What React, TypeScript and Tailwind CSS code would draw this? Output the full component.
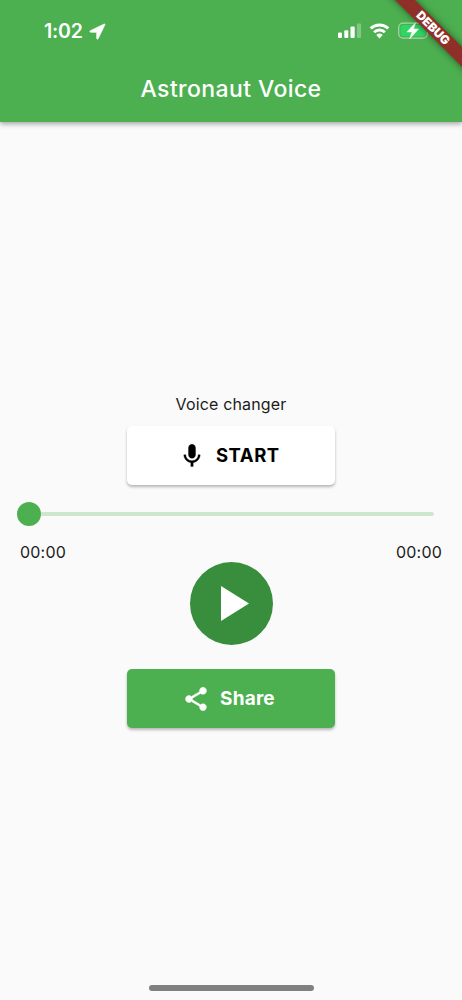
import { useState } from "react";

function StatusBar() {
  return (
    <div className="flex h-[62px] items-center justify-between pl-[44px] pr-[30px]">
      <div className="flex items-center gap-[5px]">
        <span className="w-[40px] whitespace-nowrap text-[19.5px] font-semibold leading-[24px] tracking-[-0.2px]">
          1:02
        </span>
        <svg className="h-[17px] w-[17px]" viewBox="0 0 17 17" fill="currentColor" stroke="currentColor" strokeWidth="0.7">
          <path d="M15.200 1 1.400 7.700c-.9.5-.6 1.500.3 1.500l6 .1v6c0 1 1.100 1.200 1.500.3L15.900 1.800c.3-.6-.2-1-.7-.8Z" />
        </svg>
      </div>

      <svg className="h-[18px] w-[94px]" viewBox="338 22 94 18" fill="none">
        {/* signal */}
        <rect x="338" y="32.600" width="4" height="5.300" rx="1" fill="white" />
        <rect x="344.300" y="30.200" width="4" height="7.700" rx="1" fill="white" />
        <rect x="350.500" y="26.500" width="4.200" height="11.400" rx="1" fill="white" />
        <rect x="356.900" y="23.500" width="4.200" height="14.400" rx="1" fill="white" fillOpacity="0.3" />
        {/* wifi */}
        <g stroke="white" strokeWidth="2.900">
          <path d="M370.700 28.400a12.900 12.900 0 0 1 17.600 0" />
          <path d="M374.100 32.200a7.900 7.900 0 0 1 10.800 0" />
        </g>
        <path d="M376.300 35a4.700 4.700 0 0 1 6.400 0l-3.200 3.400Z" fill="white" />
        {/* battery */}
        <rect x="398.700" y="23.100" width="28.600" height="15" rx="4.300" stroke="white" strokeOpacity="0.5" strokeWidth="1.200" />
        <rect x="400.600" y="25" width="24.800" height="11.200" rx="2.800" fill="#30d664" />
        <path d="M429 28.200c2.200.6 2.200 4.200 0 4.800Z" fill="white" fillOpacity="0.5" />
        <path d="M415.600 22.600 407 31.900h5l-2.400 7 9-9.900h-5.100l2.100-6.400Z" fill="white" stroke="white" strokeWidth="0.500" />
      </svg>
    </div>
  );
}

function DebugBanner() {
  return (
    <div className="absolute right-0 top-0 h-[90px] w-[90px] overflow-hidden">
      <div className="absolute left-[1px] top-[21px] flex h-[14.200px] w-[120px] rotate-45 items-center justify-center bg-[#902f27] text-[12px] font-black leading-none text-white shadow-[0_0_7px_rgba(0,0,0,0.500)]">
        DEBUG
      </div>
    </div>
  );
}

function formatTime(seconds: number) {
  const m = String(Math.floor(seconds / 60)).padStart(2, "0");
  const s = String(seconds % 60).padStart(2, "0");
  return `${m}:${s}`;
}

export default function App() {
  const [position] = useState(0);
  const [duration] = useState(0);

  return (
    <div className="relative flex h-[1000px] w-[462px] flex-col overflow-hidden bg-[#fafafa] font-['Inter',sans-serif] text-[#1c1c1c]">
      <header className="h-[122px] shrink-0 bg-[#4caf50] text-white shadow-[0_2px_5px_rgba(0,0,0,0.350)]">
        <StatusBar />
        <h1 className="pt-[11px] text-center text-[23px] font-medium leading-[32px] tracking-[0.400px]">
          Astronaut Voice
        </h1>
      </header>
      <DebugBanner />

      <main className="flex flex-col items-center pt-[271px]">
        <p className="text-[16px] leading-[22px] tracking-[0.150px]">Voice changer</p>

        <button className="mt-[11px] flex h-[59px] w-[208px] items-center rounded-[5px] bg-white pl-[51px] text-[18.500px] font-bold text-black shadow-[0_2px_3px_rgba(0,0,0,0.270)]">
          <svg className="h-[28px] w-[28px]" viewBox="0 0 24 24" fill="currentColor" stroke="currentColor" strokeWidth="0.3">
            <path d="M12 14c1.660 0 2.990-1.340 2.990-3L15 5c0-1.660-1.340-3-3-3S9 3.340 9 5v6c0 1.660 1.340 3 3 3zm5.300-3c0 3-2.540 5.100-5.300 5.100S6.700 14 6.700 11H5c0 3.410 2.720 6.230 6 6.720V21h2v-3.280c3.280-.48 6-3.300 6-6.720h-1.700z" />
          </svg>
          <span className="ml-[10px] tracking-[0.500px]">START</span>
        </button>

        <div className="ml-[16.500px] mt-[17px] flex h-[24px] w-[417px] items-center self-start">
          <div className="h-[24px] w-[24px] shrink-0 rounded-full bg-[#4caf50]" />
          <div className="h-[4.500px] grow rounded-r-full bg-[#cde7ce]" />
        </div>

        <div className="mt-[15px] flex w-[422px] justify-between text-[16px] leading-[22px] tracking-[0.200px]">
          <span>{formatTime(position)}</span>
          <span>{formatTime(duration)}</span>
        </div>

        <button className="-mt-px flex h-[83px] w-[83px] items-center justify-center rounded-full bg-[#388e3c] text-white">
          <svg className="h-[35px] w-[28px] translate-x-[4px]" viewBox="0 0 28 35" fill="currentColor">
            <path d="M0 0v35l28-17.500Z" />
          </svg>
        </button>

        <button className="mt-[24px] flex h-[59px] w-[208px] items-center rounded-[5px] bg-[#4caf50] pl-[55px] text-[19px] font-bold text-white shadow-[0_2px_3px_rgba(0,0,0,0.270)]">
          <svg className="h-[28px] w-[28px]" viewBox="0 0 24 24" fill="currentColor" stroke="currentColor" strokeWidth="0.4">
            <path d="M18 16.080c-.76 0-1.440.3-1.960.77L8.910 12.700c.05-.23.09-.46.09-.7s-.04-.47-.09-.7l7.050-4.110c.54.5 1.250.81 2.040.81 1.660 0 3-1.340 3-3s-1.340-3-3-3-3 1.340-3 3c0 .24.04.47.09.7L8.040 9.810C7.500 9.310 6.790 9 6 9c-1.660 0-3 1.340-3 3s1.340 3 3 3c.79 0 1.500-.31 2.040-.81l7.120 4.160c-.05.21-.08.43-.08.65 0 1.610 1.310 2.920 2.920 2.920s2.920-1.310 2.920-2.920-1.310-2.920-2.920-2.920z" />
          </svg>
          <span className="ml-[10px] pt-[2px] tracking-[0.200px]">Share</span>
        </button>
      </main>

      <div className="mb-[9px] mt-auto h-[6px] w-[165px] self-center rounded-full bg-[#808080]" />
    </div>
  );
}
